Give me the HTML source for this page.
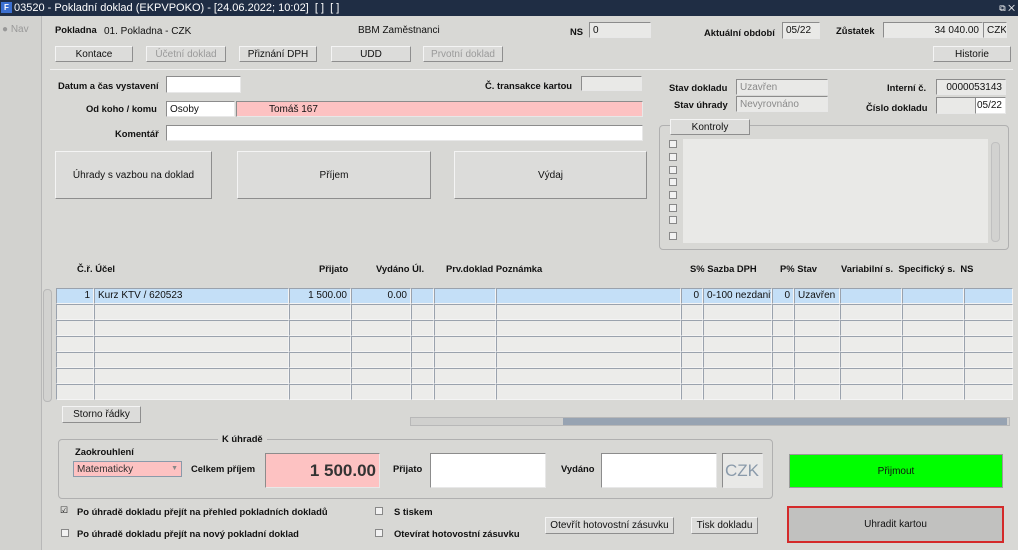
<!DOCTYPE html>
<html><head><meta charset="utf-8"><style>
*{box-sizing:border-box;margin:0;padding:0}
body{width:1018px;height:550px;overflow:hidden;background:#d8d8d5;font-family:"Liberation Sans",sans-serif;font-size:10px;color:#111;position:relative}
.a{position:absolute}
.b{font-weight:bold;font-size:9.4px}
.f{position:absolute;background:#fff;border:1px solid #8c8c8c;border-right-color:#e8e8e8;border-bottom-color:#e8e8e8;padding:0 3px;font-size:10px;white-space:nowrap;overflow:hidden;display:flex;align-items:center}
.g{background:#e9e9e7}
.btn{position:absolute;background:#dcdcda;border:1px solid #f4f4f4;border-right-color:#8e8e8e;border-bottom-color:#8e8e8e;text-align:center;font-size:10px;display:flex;align-items:center;justify-content:center}
.dis{color:#9a9a9a}
.c{position:absolute;height:16px;background:#ececea;border:1px solid #9aa2ad;border-right-color:#f4f4f4;border-bottom-color:#f4f4f4;font-size:10px;padding:0 3px;line-height:14px;white-space:nowrap;overflow:hidden}
.s{background:#c4dff7}
.cb{position:absolute;width:8px;height:8px;border:1px solid #888;background:#f2f2f2}
</style></head><body>
<div class="a" style="left:0;top:0;width:1018px;height:16px;background:#1f2d44;color:#fff;font-size:11px;line-height:16px;padding-left:14px">03520 - Pokladní doklad (EKPVPOKO) - [24.06.2022; 10:02]&nbsp; [ ]&nbsp; [ ]<span style="position:absolute;right:3px;font-size:9px">⧉ ✕</span></div>
<div class="a" style="left:1px;top:2px;width:11px;height:11px;background:#3b6fd0;color:#fff;font-size:8px;line-height:11px;text-align:center;font-weight:bold">F</div>
<div class="a" style="left:0;top:16px;width:42px;height:534px;background:#d2d2cf;border-right:1px solid #b8b8b8"></div>
<div class="a" style="left:2px;top:24px;color:#999;font-size:10px">● Nav</div>

<div class="a b" style="left:55px;top:24px">Pokladna</div>
<div class="a" style="left:104px;top:26px">01. Pokladna - CZK</div>
<div class="a" style="left:358px;top:25px">BBM Zaměstnanci</div>
<div class="a b" style="left:570px;top:26px">NS</div>
<div class="f g" style="left:589px;top:22px;width:62px;height:16px">0</div>
<div class="a b" style="left:704px;top:27px">Aktuální období</div>
<div class="f g" style="left:782px;top:22px;width:38px;height:17px">05/22</div>
<div class="a b" style="left:836px;top:25px">Zůstatek</div>
<div class="f g" style="left:883px;top:22px;width:100px;height:16px;justify-content:flex-end">34 040.00</div>
<div class="f g" style="left:983px;top:22px;width:24px;height:16px">CZK</div>

<div class="btn" style="left:55px;top:46px;width:78px;height:16px">Kontace</div>
<div class="btn dis" style="left:146px;top:46px;width:80px;height:16px">Účetní doklad</div>
<div class="btn" style="left:239px;top:46px;width:78px;height:16px">Přiznání DPH</div>
<div class="btn" style="left:331px;top:46px;width:80px;height:16px">UDD</div>
<div class="btn dis" style="left:423px;top:46px;width:80px;height:16px">Prvotní doklad</div>
<div class="btn" style="left:933px;top:46px;width:78px;height:16px">Historie</div>
<div class="a" style="left:50px;top:69px;width:963px;height:1px;background:#bdbdbd;border-bottom:1px solid #f0f0f0"></div>

<div class="a b" style="left:58px;top:80px">Datum a čas vystavení</div>
<div class="f" style="left:166px;top:76px;width:75px;height:17px"></div>
<div class="a b" style="left:485px;top:80px">Č. transakce kartou</div>
<div class="f g" style="left:581px;top:76px;width:61px;height:15px"></div>
<div class="a b" style="left:86px;top:103px">Od koho / komu</div>
<div class="f" style="left:166px;top:101px;width:69px;height:16px">Osoby</div>
<div class="f" style="left:236px;top:101px;width:407px;height:16px;background:#fdc2c2;padding-left:32px">Tomáš 167</div>
<div class="a b" style="left:115px;top:128px">Komentář</div>
<div class="f" style="left:166px;top:125px;width:477px;height:16px"></div>

<div class="btn" style="left:55px;top:151px;width:157px;height:48px">Úhrady s vazbou na doklad</div>
<div class="btn" style="left:237px;top:151px;width:194px;height:48px">Příjem</div>
<div class="btn" style="left:454px;top:151px;width:193px;height:48px">Výdaj</div>

<div class="a b" style="left:669px;top:82px">Stav dokladu</div>
<div class="f g" style="left:736px;top:79px;width:92px;height:16px;color:#8a8a8a">Uzavřen</div>
<div class="a b" style="left:674px;top:99px">Stav úhrady</div>
<div class="f g" style="left:736px;top:96px;width:92px;height:16px;color:#8a8a8a">Nevyrovnáno</div>
<div class="a b" style="left:887px;top:82px">Interní č.</div>
<div class="f g" style="left:936px;top:79px;width:70px;height:16px;justify-content:flex-end">0000053143</div>
<div class="a b" style="left:866px;top:102px">Číslo dokladu</div>
<div class="f g" style="left:936px;top:97px;width:40px;height:17px"></div>
<div class="f" style="left:975px;top:97px;width:31px;height:17px;justify-content:flex-end">05/22</div>

<div class="a" style="left:659px;top:125px;width:350px;height:125px;border:1px solid #b0b0b0;border-radius:4px"></div>
<div class="btn" style="left:670px;top:119px;width:80px;height:16px">Kontroly</div>
<div class="a" style="left:683px;top:139px;width:305px;height:104px;background:#e9e9e7"></div>
<div class="cb" style="left:669px;top:140px"></div><div class="cb" style="left:669px;top:153px"></div><div class="cb" style="left:669px;top:166px"></div><div class="cb" style="left:669px;top:178px"></div><div class="cb" style="left:669px;top:191px"></div><div class="cb" style="left:669px;top:204px"></div><div class="cb" style="left:669px;top:216px"></div><div class="cb" style="left:669px;top:232px"></div>
<div class="a" style="left:991px;top:142px;width:9px;height:100px;background:#d2d2d0;border:1px solid #c0c0c0;border-radius:4px"></div>

<div class="a b" style="left:77px;top:263px">Č.ř. Účel</div>
<div class="a b" style="left:319px;top:263px">Přijato</div>
<div class="a b" style="left:376px;top:263px">Vydáno Úl.</div>
<div class="a b" style="left:446px;top:263px">Prv.doklad Poznámka</div>
<div class="a b" style="left:690px;top:263px">S% Sazba DPH</div>
<div class="a b" style="left:780px;top:263px">P% Stav</div>
<div class="a b" style="left:841px;top:263px">Variabilní s. &nbsp;Specifický s. &nbsp;NS</div>

<div class="a" style="left:43px;top:289px;width:9px;height:113px;background:#d2d2d0;border:1px solid #b8b8b8;border-radius:4px"></div>
<div id="grid"></div>
<script>
var cols=[[56,38],[94,195],[289,62],[351,60],[411,23],[434,62],[496,185],[681,22],[703,69],[772,22],[794,46],[840,62],[902,62],[964,49]];
var r1=["1","Kurz KTV / 620523","1 500.00","0.00","","","","0","0-100 nezdanite","0","Uzavřen","","",""];
var right=[1,0,1,1,0,0,0,1,0,1,0,0,0,0];
var h="";
for(var r=0;r<7;r++){for(var i=0;i<cols.length;i++){var t=r==0?r1[i]:"";h+='<div class="c'+(r==0?' s':'')+'" style="left:'+cols[i][0]+'px;top:'+(288+r*16)+'px;width:'+cols[i][1]+'px;'+(right[i]?'text-align:right':'')+'">'+t+'</div>';}}
document.getElementById("grid").innerHTML=h;
</script>

<div class="btn" style="left:62px;top:406px;width:79px;height:17px">Storno řádky</div>
<div class="a" style="left:410px;top:417px;width:600px;height:9px;background:#d0d0ce;border:1px solid #b8b8b8"></div>
<div class="a" style="left:563px;top:418px;width:444px;height:7px;background:#97a3b2"></div>

<div class="a" style="left:58px;top:439px;width:715px;height:60px;border:1px solid #b0b0b0;border-radius:4px"></div>
<div class="a b" style="left:218px;top:433px;background:#d8d8d5;padding:0 4px">K úhradě</div>
<div class="a b" style="left:75px;top:446px">Zaokrouhlení</div>
<div class="f" style="left:73px;top:461px;width:109px;height:16px;background:#fdc2c2;border-color:#8a9aaa;color:#333">Matematicky<span style="position:absolute;right:3px;color:#888;font-size:7px;top:3px">▼</span></div>
<div class="a b" style="left:191px;top:463px">Celkem příjem</div>
<div class="f" style="left:265px;top:453px;width:115px;height:35px;background:#fdc2c2;justify-content:flex-end;font-size:17px;font-weight:bold;color:#333">1 500.00</div>
<div class="a b" style="left:393px;top:463px">Přijato</div>
<div class="f" style="left:430px;top:453px;width:116px;height:35px"></div>
<div class="a b" style="left:561px;top:463px">Vydáno</div>
<div class="f" style="left:601px;top:453px;width:116px;height:35px"></div>
<div class="f g" style="left:722px;top:453px;width:41px;height:35px;font-size:17px;color:#8a9aaa;padding:0 2px">CZK</div>

<div class="a" style="left:789px;top:454px;width:214px;height:34px;background:#00ff00;border:1px solid #9a9a9a;display:flex;align-items:center;justify-content:center">Přijmout</div>
<div class="a" style="left:787px;top:506px;width:217px;height:37px;background:#c1c1bf;border:2px solid #d42a2a;display:flex;align-items:center;justify-content:center">Uhradit kartou</div>

<div class="a" style="left:60px;top:505px;font-size:9px">☑</div>
<div class="a b" style="left:77px;top:506px">Po úhradě dokladu přejít na přehled pokladních dokladů</div>
<div class="cb" style="left:61px;top:529px"></div>
<div class="a b" style="left:77px;top:528px">Po úhradě dokladu přejít na nový pokladní doklad</div>
<div class="cb" style="left:375px;top:507px"></div>
<div class="a b" style="left:394px;top:506px">S tiskem</div>
<div class="cb" style="left:375px;top:529px"></div>
<div class="a b" style="left:394px;top:528px">Otevírat hotovostní zásuvku</div>
<div class="btn" style="left:545px;top:517px;width:129px;height:17px">Otevřít hotovostní zásuvku</div>
<div class="btn" style="left:691px;top:517px;width:67px;height:17px">Tisk dokladu</div>
</body></html>
